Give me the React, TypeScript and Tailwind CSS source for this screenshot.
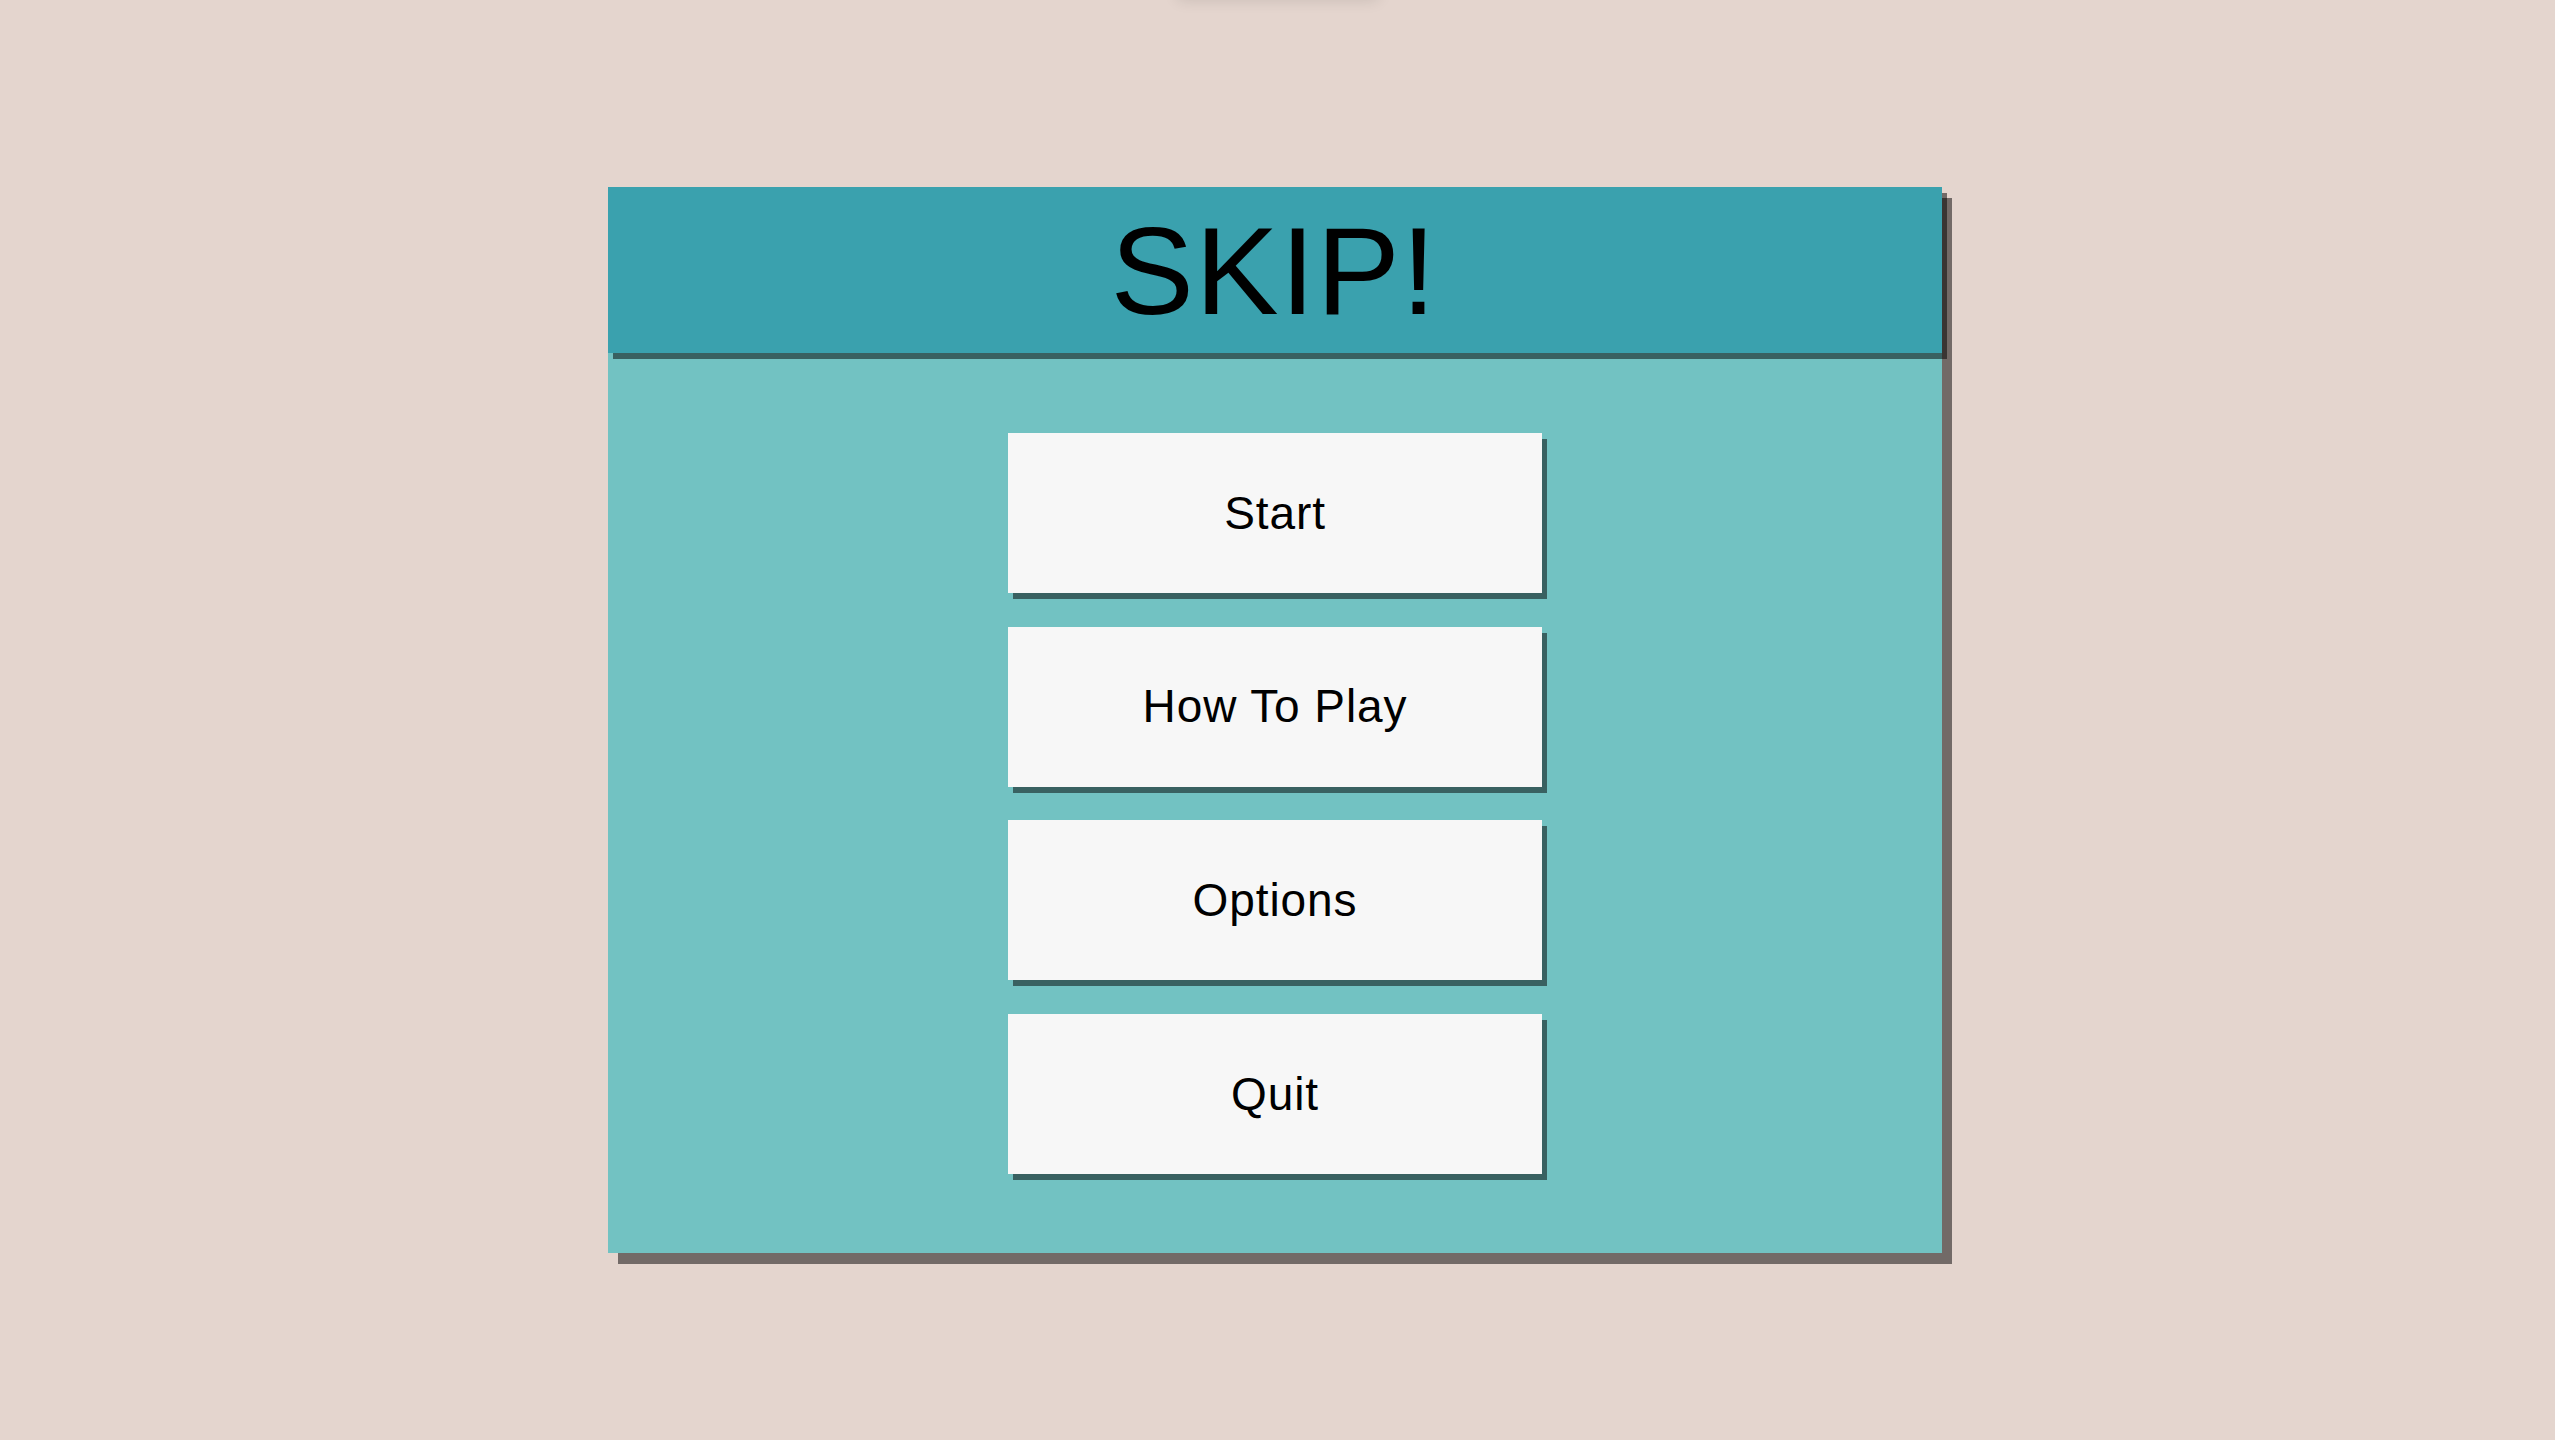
import React from "react";

export default function App() {
  const items = ["Start", "How To Play", "Options", "Quit"];
  return (
    <div
      className="relative w-full h-screen overflow-hidden bg-[#e4d5ce] flex items-center justify-center pr-[5px]"
      style={{ fontFamily: '"Liberation Sans", Arial, sans-serif' }}
    >
      <div className="absolute left-1/2 -translate-x-1/2 -top-[60px] w-[200px] h-[56px] bg-[#e4d5ce] shadow-[0_4px_14px_rgba(0,0,0,0.12)]" />
      <div className="w-[1334px] h-[1066px] bg-[#72c2c2] shadow-[10px_11px_0_rgba(0,0,0,0.5)] flex flex-col">
        <div className="h-[166px] bg-[#3aa1ae] shadow-[5px_6px_0_rgba(0,0,0,0.5)] flex items-center justify-center">
          <h1 className="text-[125px] leading-none text-black font-normal tracking-[0.012em] pr-[2px]">SKIP!</h1>
        </div>
        <div className="flex flex-col items-center gap-[33.7px] pt-[80px]">
          {items.map((t) => (
            <button
              key={t}
              className="w-[534px] h-[160px] bg-[#f7f7f7] shadow-[5px_6px_0_rgba(0,0,0,0.5)] flex items-center justify-center text-[46px] text-black tracking-[0.02em]"
            >
              {t}
            </button>
          ))}
        </div>
      </div>
    </div>
  );
}
